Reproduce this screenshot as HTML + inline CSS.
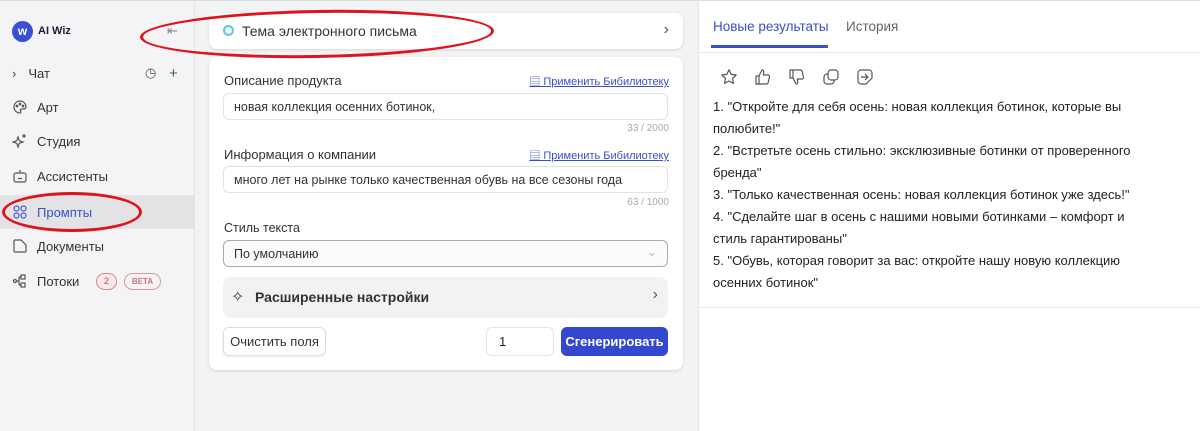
<!DOCTYPE html>
<html><head><meta charset="utf-8"><style>
*{box-sizing:border-box;margin:0;padding:0}
body{width:1200px;height:431px;overflow:hidden;font-family:"Liberation Sans","Noto Sans CJK SC",sans-serif;font-size:13px;color:#222;background:#f2f3f5;position:relative}
.sb{position:absolute;left:0;top:0;width:195px;height:431px;background:#f4f4f6;border-right:1px solid #e5e5e8}
.nav{position:absolute;left:0;width:195px;height:34px;display:flex;align-items:center;padding-left:12px;font-size:13px;color:#333}
.nav svg{margin-right:9px}
.main{position:absolute;left:196px;top:0;width:502px;height:431px;background:#f2f3f5}
.card{position:absolute;background:#fff;border-radius:8px;box-shadow:0 1px 3px rgba(0,0,0,.12)}
.lbl{position:absolute;left:15px;font-size:13px;color:#333}
.lnk{position:absolute;right:14px;font-size:11px;color:#3a4fc9;text-decoration:underline}
.inp{position:absolute;left:14px;width:445px;height:27px;border:1px solid #e2e2e6;border-radius:6px;padding:6px 10px;font-size:12.5px;color:#333}
.cnt{position:absolute;right:14px;font-size:10px;color:#aaa}
.right{position:absolute;left:698px;top:0;width:502px;height:431px;background:#fff;border-left:1px solid #e4e4e8}
.res{position:absolute;left:14px;top:96px;width:440px;font-size:13px;line-height:22px;color:#222}
.ell{position:absolute;border:3.5px solid #e0121b;border-radius:50%}
.ic{position:absolute;top:68px}
</style></head><body>
<div style="position:absolute;left:0;top:0;width:1200px;height:1px;background:#ddd;z-index:5"></div>
<div class="sb">
 <div style="position:absolute;left:12px;top:21px;width:21px;height:21px;border-radius:50%;background:#3a4fd6;color:#fff;font-weight:bold;font-size:12px;text-align:center;line-height:21px">w</div>
 <div style="position:absolute;left:38px;top:25px;font-size:11px;font-weight:bold;color:#1c1c3a">AI Wiz</div>
 <div style="position:absolute;left:167px;top:23px;font-size:13px;color:#888">⇤</div>
 <div class="nav" style="top:56px"><span style="margin-right:12px;color:#444">›</span>Чат<span style="position:absolute;left:145px;color:#555">◷</span><span style="position:absolute;left:169px;color:#555;font-size:15px">+</span></div>
 <div class="nav" style="top:90px"><svg width="16" height="16" viewBox="0 0 16 16" fill="none" stroke="#555" stroke-width="1.2"><path d="M8 2a6 6 0 100 12c1 0 1-1 .5-2s0-2 1.5-2h2a2 2 0 002-2A6 6 0 008 2z"/><circle cx="5" cy="7" r=".8"/><circle cx="8" cy="5" r=".8"/><circle cx="11" cy="7" r=".8"/></svg>Арт</div>
 <div class="nav" style="top:124px"><svg width="16" height="16" viewBox="0 0 16 16" fill="none" stroke="#555" stroke-width="1.2"><path d="M6 4l1.3 3.7L11 9l-3.7 1.3L6 14l-1.3-3.7L1 9l3.7-1.3z"/><path d="M12 1v4M10 3h4"/></svg>Студия</div>
 <div class="nav" style="top:159px"><svg width="16" height="16" viewBox="0 0 16 16" fill="none" stroke="#555" stroke-width="1.2"><rect x="2" y="5" width="12" height="9" rx="2"/><path d="M8 5V2M6 10q2 1.5 4 0"/></svg>Ассистенты</div>
 <div class="nav" style="top:195px;background:#e3e3e6;color:#3a4fc9"><svg width="16" height="16" viewBox="0 0 16 16" fill="none" stroke="#4a5fd0" stroke-width="1.2"><circle cx="4.5" cy="4.5" r="2.5"/><circle cx="11.5" cy="4.5" r="2.5"/><circle cx="4.5" cy="11.5" r="2.5"/><circle cx="11.5" cy="11.5" r="2.5"/></svg>Промпты</div>
 <div class="nav" style="top:229px"><svg width="16" height="16" viewBox="0 0 16 16" fill="none" stroke="#555" stroke-width="1.2"><path d="M3 2h6l5 5v6a1 1 0 01-1 1H3a1 1 0 01-1-1V3a1 1 0 011-1z"/></svg>Документы</div>
 <div class="nav" style="top:264px"><svg width="16" height="16" viewBox="0 0 16 16" fill="none" stroke="#555" stroke-width="1.2"><circle cx="3" cy="8" r="1.5"/><rect x="9" y="2" width="4" height="4"/><rect x="9" y="10" width="4" height="4"/><path d="M4.5 8h2.5M7 4v8M7 4h2M7 12h2"/></svg>Потоки
  <span style="position:absolute;left:96px;width:21px;height:17px;border:1px solid #d88;border-radius:9px;background:#fde8ea;color:#c44;font-size:9px;text-align:center;line-height:15px">2</span>
  <span style="position:absolute;left:124px;width:37px;height:17px;border:1px solid #d99;border-radius:9px;color:#c77;font-size:8px;font-weight:bold;text-align:center;line-height:15px">BETA</span></div>
</div>
<div class="main">
 <div class="card" style="left:13px;top:13px;width:474px;height:36px">
  <div style="position:absolute;left:14px;top:12px;width:11px;height:11px;border-radius:50%;border:2px solid #6cc6d6;background:#e8f6f9"></div>
  <div style="position:absolute;left:33px;top:10px;font-size:14px;color:#333">Тема электронного письма</div>
  <div style="position:absolute;right:14px;top:8px;font-size:16px;color:#555">›</div>
 </div>
 <div class="card" style="left:13px;top:57px;width:474px;height:313px">
  <div class="lbl" style="top:16px">Описание продукта</div>
  <div class="lnk" style="top:16px">▤ Применить Бибилиотеку</div>
  <div class="inp" style="top:36px">новая коллекция осенних ботинок,</div>
  <div class="cnt" style="top:66px">33 / 2000</div>
  <div class="lbl" style="top:90px">Информация о компании</div>
  <div class="lnk" style="top:90px">▤ Применить Бибилиотеку</div>
  <div class="inp" style="top:109px">много лет на рынке только качественная обувь на все сезоны года</div>
  <div class="cnt" style="top:140px">63 / 1000</div>
  <div class="lbl" style="top:164px;font-size:12.5px">Стиль текста</div>
  <div class="inp" style="top:183px;border-color:#aaa;background:#fbfbfd">По умолчанию<span style="position:absolute;right:10px;top:3px;color:#bbb">⌄</span></div>
  <div style="position:absolute;left:14px;top:220px;width:445px;height:41px;background:#f2f2f4;border-radius:8px">
   <span style="position:absolute;left:8px;top:10px;font-size:16px;color:#444">✧</span>
   <span style="position:absolute;left:32px;top:12px;font-size:14px;font-weight:bold;color:#333">Расширенные настройки</span>
   <span style="position:absolute;right:10px;top:9px;font-size:16px;color:#555">›</span></div>
  <div style="position:absolute;left:14px;top:270px;width:103px;height:29px;border:1px solid #ddd;border-radius:6px;font-size:13px;text-align:center;line-height:27px;color:#333;box-shadow:0 1px 2px rgba(0,0,0,.08)">Очистить поля</div>
  <div style="position:absolute;left:277px;top:270px;width:68px;height:29px;border:1px solid #e5e5e8;border-radius:6px;padding-left:12px;line-height:27px">1</div>
  <div style="position:absolute;left:352px;top:270px;width:107px;height:29px;background:#3447cf;border-radius:6px;color:#fff;font-size:13px;font-weight:bold;text-align:center;line-height:29px">Сгенерировать</div>
 </div>
</div>
<div class="right">
 <div style="position:absolute;left:14px;top:19px;font-size:13.5px;color:#3a4fc9">Новые результаты</div>
 <div style="position:absolute;left:147px;top:19px;font-size:13.5px;color:#666">История</div>
 <div style="position:absolute;left:12px;top:45px;width:117px;height:3px;background:#3a4fc9"></div>
 <div style="position:absolute;left:0;top:52px;width:502px;height:1px;background:#e6e6ea"></div>
 <svg class="ic" style="left:21px" width="18" height="18" viewBox="0 0 18 18" fill="none" stroke="#555" stroke-width="1.2" stroke-linejoin="round"><path d="M9 1.8l2.2 4.6 5 .6-3.7 3.4 1 5L9 13l-4.5 2.4 1-5L1.8 7l5-.6z"/></svg>
 <svg class="ic" style="left:55px" width="18" height="18" viewBox="0 0 18 18" fill="none" stroke="#555" stroke-width="1.2" stroke-linejoin="round"><path d="M2 8h3v8H2zM5 8l3-6c1.5 0 2 1 1.7 2.5L9.3 7H14a1.5 1.5 0 011.5 1.8l-1.3 5.7A2 2 0 0112.3 16H5"/></svg>
 <svg class="ic" style="left:89px" width="18" height="18" viewBox="0 0 18 18" fill="none" stroke="#555" stroke-width="1.2" stroke-linejoin="round"><path d="M2 2h3v8H2zM5 10l3 6c1.5 0 2-1 1.7-2.5L9.3 11H14a1.5 1.5 0 001.5-1.8L14.2 3.5A2 2 0 0012.3 2H5"/></svg>
 <svg class="ic" style="left:123px" width="18" height="18" viewBox="0 0 18 18" fill="none" stroke="#555" stroke-width="1.2"><rect x="6" y="2" width="10" height="10" rx="3"/><path d="M12 12v1a3 3 0 01-3 3H5a3 3 0 01-3-3V9a3 3 0 013-3h1"/></svg>
 <svg class="ic" style="left:157px" width="18" height="18" viewBox="0 0 18 18" fill="none" stroke="#555" stroke-width="1.2" stroke-linejoin="round"><path d="M5 2h8a3 3 0 013 3v5l-6 6H5a3 3 0 01-3-3V5a3 3 0 013-3zM5 9h7M9 6l3 3-3 3"/></svg>
 <div class="res">1. "Откройте для себя осень: новая коллекция ботинок, которые вы полюбите!"<br>2. "Встретьте осень стильно: эксклюзивные ботинки от проверенного бренда"<br>3. "Только качественная осень: новая коллекция ботинок уже здесь!"<br>4. "Сделайте шаг в осень с нашими новыми ботинками – комфорт и стиль гарантированы"<br>5. "Обувь, которая говорит за вас: откройте нашу новую коллекцию осенних ботинок"</div>
 <div style="position:absolute;left:0;top:307px;width:502px;height:1px;background:#e6e6ea"></div>
</div>
<div class="ell" style="left:140px;top:10px;width:354px;height:48px;transform:rotate(-1deg)"></div>
<div class="ell" style="left:2px;top:192px;width:140px;height:40px"></div>
</body></html>
